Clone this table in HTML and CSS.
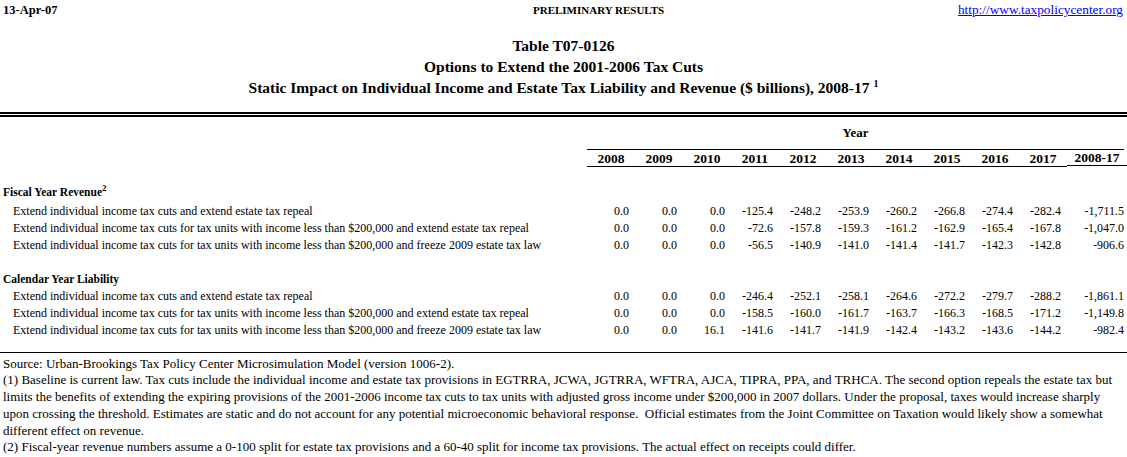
FILE: index.html
```html
<!DOCTYPE html>
<html>
<head>
<meta charset="utf-8">
<link rel="stylesheet" href="styles.css">
</head>
<body>
<header class="head">
  <div class="topbar">
    <span class="date">13-Apr-07</span>
    <span class="prelim">PRELIMINARY RESULTS</span>
    <a class="url" href="#">http://www.taxpolicycenter.org</a>
  </div>
  <div class="titles">
    <div class="title">Table T07-0126</div>
    <div class="title">Options to Extend the 2001-2006 Tax Cuts</div>
    <div class="title">Static Impact on Individual Income and Estate Tax Liability and Revenue ($ billions), 2008-17 <sup class="tsup">1</sup></div>
  </div>
</header>
<table class="data">
  <colgroup>
    <col class="c-label">
    <col class="c-yr"><col class="c-yr"><col class="c-yr"><col class="c-yr"><col class="c-yr">
    <col class="c-yr"><col class="c-yr"><col class="c-yr"><col class="c-yr"><col class="c-yr">
    <col class="c-tot">
  </colgroup>
  <thead>
    <tr class="r-year">
      <th></th>
      <th colspan="11"><div class="yearline">Year</div></th>
    </tr>
    <tr class="r-years">
      <th></th>
      <th class="yh">2008</th><th class="yh">2009</th><th class="yh">2010</th><th class="yh">2011</th><th class="yh">2012</th>
      <th class="yh">2013</th><th class="yh">2014</th><th class="yh">2015</th><th class="yh">2016</th><th class="yh">2017</th>
      <th class="th-tot"><div class="totline">2008-17</div></th>
    </tr>
  </thead>
  <tbody>
    <tr class="r-gap"><td colspan="12"></td></tr>
    <tr class="r-sec r-sec-fy"><td class="sec" colspan="12">Fiscal Year Revenue<sup class="ssup">2</sup></td></tr>
    <tr class="r-row">
      <td class="lbl">Extend individual income tax cuts and extend estate tax repeal</td>
      <td>0.0</td><td>0.0</td><td>0.0</td><td>-125.4</td><td>-248.2</td><td>-253.9</td><td>-260.2</td><td>-266.8</td><td>-274.4</td><td>-282.4</td><td class="tot">-1,711.5</td>
    </tr>
    <tr class="r-row">
      <td class="lbl">Extend individual income tax cuts for tax units with income less than $200,000 and extend estate tax repeal</td>
      <td>0.0</td><td>0.0</td><td>0.0</td><td>-72.6</td><td>-157.8</td><td>-159.3</td><td>-161.2</td><td>-162.9</td><td>-165.4</td><td>-167.8</td><td class="tot">-1,047.0</td>
    </tr>
    <tr class="r-row">
      <td class="lbl">Extend individual income tax cuts for tax units with income less than $200,000 and freeze 2009 estate tax law</td>
      <td>0.0</td><td>0.0</td><td>0.0</td><td>-56.5</td><td>-140.9</td><td>-141.0</td><td>-141.4</td><td>-141.7</td><td>-142.3</td><td>-142.8</td><td class="tot">-906.6</td>
    </tr>
    <tr class="r-row"><td colspan="12"></td></tr>
    <tr class="r-sec"><td class="sec" colspan="12">Calendar Year Liability</td></tr>
    <tr class="r-row">
      <td class="lbl">Extend individual income tax cuts and extend estate tax repeal</td>
      <td>0.0</td><td>0.0</td><td>0.0</td><td>-246.4</td><td>-252.1</td><td>-258.1</td><td>-264.6</td><td>-272.2</td><td>-279.7</td><td>-288.2</td><td class="tot">-1,861.1</td>
    </tr>
    <tr class="r-row">
      <td class="lbl">Extend individual income tax cuts for tax units with income less than $200,000 and extend estate tax repeal</td>
      <td>0.0</td><td>0.0</td><td>0.0</td><td>-158.5</td><td>-160.0</td><td>-161.7</td><td>-163.7</td><td>-166.3</td><td>-168.5</td><td>-171.2</td><td class="tot">-1,149.8</td>
    </tr>
    <tr class="r-row">
      <td class="lbl">Extend individual income tax cuts for tax units with income less than $200,000 and freeze 2009 estate tax law</td>
      <td>0.0</td><td>0.0</td><td>16.1</td><td>-141.6</td><td>-141.7</td><td>-141.9</td><td>-142.4</td><td>-143.2</td><td>-143.6</td><td>-144.2</td><td class="tot">-982.4</td>
    </tr>
    <tr class="r-end"><td colspan="12"></td></tr>
  </tbody>
</table>
<footer class="notes">
  <p>Source: Urban-Brookings Tax Policy Center Microsimulation Model (version 1006-2).</p>
  <p>(1) Baseline is current law. Tax cuts include the individual income and estate tax provisions in EGTRRA, JCWA, JGTRRA, WFTRA, AJCA, TIPRA, PPA, and TRHCA. The second option repeals the estate tax but<br>limits the benefits of extending the expiring provisions of the 2001-2006 income tax cuts to tax units with adjusted gross income under $200,000 in 2007 dollars. Under the proposal, taxes would increase sharply<br>upon crossing the threshold. Estimates are static and do not account for any potential microeconomic behavioral response.&nbsp; Official estimates from the Joint Committee on Taxation would likely show a somewhat<br>different effect on revenue.</p>
  <p>(2) Fiscal-year revenue numbers assume a 0-100 split for estate tax provisions and a 60-40 split for income tax provisions. The actual effect on receipts could differ.</p>
</footer>
</body>
</html>
```

FILE: styles.css
```css
html, body {
  margin: 0;
  padding: 0;
  background: #ffffff;
  color: #000000;
  font-family: "Liberation Serif", "Times New Roman", serif;
}

.head {
  width: 1127px;
  border-bottom: 5px double #000;
  padding-bottom: 14px;
}

.topbar {
  display: grid;
  grid-template-columns: 533px auto 1fr;
  align-items: center;
  height: 20px;
}

.date {
  font-weight: bold;
  font-size: 12.5px;
  padding-left: 3px;
}

.prelim {
  font-weight: bold;
  font-size: 11px;
}

.url {
  justify-self: end;
  padding-right: 4px;
  color: #0000ff;
  text-decoration: underline;
  font-size: 13.3px;
}

.titles {
  margin-top: 15px;
  text-align: center;
}

.title {
  font-size: 15.5px;
  font-weight: bold;
  line-height: 21px;
}

.tsup {
  font-size: 10px;
  vertical-align: 6px;
  line-height: 0;
}

.data {
  width: 1127px;
  table-layout: fixed;
  border-collapse: collapse;
  font-size: 12px;
}

.c-label { width: 587px; }
.c-yr { width: 48px; }
.c-tot { width: 60px; }

.data th, .data td {
  padding: 0;
}

.r-year th {
  padding-top: 7px;
  font-weight: bold;
  font-size: 13px;
}

.yearline {
  line-height: 17px;
  padding-bottom: 8px;
  border-bottom: 1px solid #000;
  margin-right: 3px;
  text-align: center;
}

.r-years th {
  font-weight: bold;
  font-size: 13.5px;
  line-height: 15px;
  height: 16px;
  text-align: center;
}

.r-years th.yh {
  border-bottom: 1px solid #000;
}

.th-tot {
  padding: 0 3px 0 10px;
}

.totline {
  border-bottom: 1px solid #000;
  line-height: 15px;
}

.r-gap td { height: 15px; }

.r-sec td, .r-row td {
  height: 17px;
  line-height: 17px;
}

.r-sec-fy td { height: 21px; }

.sec {
  font-weight: bold;
  font-size: 11.5px;
  padding-left: 3px !important;
  white-space: nowrap;
}

.ssup {
  font-size: 9px;
  vertical-align: 5px;
  line-height: 0;
}

.r-row td {
  text-align: right;
  padding-right: 6px;
  white-space: nowrap;
}

.r-row td.lbl {
  text-align: left;
  padding-left: 13px;
  padding-right: 0;
}

.r-row td.tot {
  padding-right: 3px;
}

.r-end td {
  height: 13px;
  border-bottom: 1px solid #000;
}

.notes {
  width: 1127px;
  padding-top: 2.5px;
  font-size: 13px;
  line-height: 16.8px;
}

.notes p {
  margin: 0;
  padding-left: 3px;
  white-space: nowrap;
}
```
